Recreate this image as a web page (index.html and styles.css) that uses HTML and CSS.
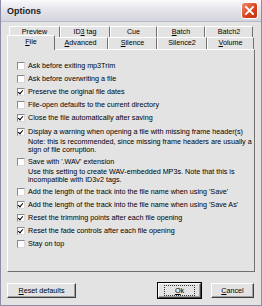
FILE: index.html
```html
<!DOCTYPE html>
<html>
<head>
    <title>Options</title>
    <link rel="stylesheet" href="styles.css">
</head>
<body>
    <div class="window">
        <div class="titlebar">
            <span class="title">Options</span>
            <span class="close">
                <svg width="15" height="15" viewBox="0 0 15 15">
                    <path d="M4 4 L11 11 M11 4 L4 11" stroke="#fff" stroke-width="1.8" stroke-linecap="square"/>
                </svg>
            </span>
        </div>

        <div class="tabs">
            <div class="tabrow back">
                <div class="tab"><u>P</u>review</div>
                <div class="tab">ID<u>3</u> tag</div>
                <div class="tab">Cue</div>
                <div class="tab"><u>B</u>atch</div>
                <div class="tab">Batch2</div>
            </div>
            <div class="tabrow front">
                <div class="tab active"><u>F</u>ile</div>
                <div class="tab"><u>A</u>dvanced</div>
                <div class="tab"><u>S</u>ilence</div>
                <div class="tab">Silence2</div>
                <div class="tab"><u>V</u>olume</div>
            </div>
        </div>

        <div class="panel">
            <div class="opt"><span class="box"></span>Ask before exiting mp3Trim</div>
            <div class="opt"><span class="box"></span>Ask before overwriting a file</div>
            <div class="opt"><span class="box checked"></span>Preserve the original file dates</div>
            <div class="opt"><span class="box"></span>File-open defaults to the current directory</div>
            <div class="opt"><span class="box checked"></span>Close the file automatically after saving</div>
            <div class="opt multi">
                <div class="line"><span class="box checked"></span>Display a warning when opening a file with missing frame header(s)</div>
                <div class="note">Note: this is recommended, since missing frame headers are usually a<br>sign of file corruption.</div>
            </div>
            <div class="opt multi">
                <div class="line"><span class="box"></span>Save with '.WAV' extension</div>
                <div class="note">Use this setting to create WAV-embedded MP3s. Note that this is<br>incompatible with ID3v2 tags.</div>
            </div>
            <div class="opt"><span class="box"></span>Add the length of the track into the file name when using 'Save'</div>
            <div class="opt"><span class="box checked"></span>Add the length of the track into the file name when using 'Save As'</div>
            <div class="opt"><span class="box checked"></span>Reset the trimming points after each file opening</div>
            <div class="opt"><span class="box checked"></span>Reset the fade controls after each file opening</div>
            <div class="opt"><span class="box"></span>Stay on top</div>
        </div>

        <div class="buttons">
            <button class="btn wide"><u>R</u>eset defaults</button>
            <span class="spacer"></span>
            <button class="btn default"><span class="focus"><u>O</u>k</span></button>
            <button class="btn"><u>C</u>ancel</button>
        </div>
    </div>
</body>
</html>
```
FILE: styles.css
```css
body {
    margin: 0;
    background-color: #e3e3e3;
    font-family: "Liberation Sans", Arial, sans-serif;
    font-size: 7.2px;
    color: #000;
}

.window {
    width: 262px;
    height: 306px;
    box-sizing: border-box;
    border: 1px solid #8c8ca8;
    border-top: none;
    background-color: #e3e3e3;
    display: flex;
    flex-direction: column;
}

.titlebar {
    height: 21px;
    display: flex;
    align-items: center;
    padding: 0 3px 0 6px;
    background: linear-gradient(#fbfbfc, #e6e6ec 40%, #d4d4dc);
    border-bottom: 1px solid #b8b8c8;
}

.title {
    flex: 1;
    font-weight: bold;
    font-size: 9px;
    color: #1c1c1c;
}

.close {
    width: 15px;
    height: 15px;
    border: 1px solid #fff;
    border-radius: 3px;
    background: linear-gradient(135deg, #f09070, #d8401c 60%, #c03010);
    display: flex;
}

.tabs {
    margin-top: 4px;
}

.tabrow {
    display: flex;
    height: 11px;
}

.tabrow.back {
    padding-left: 8px;
}

.tabrow.front {
    padding-left: 7px;
    height: 12px;
}

.tab {
    box-sizing: border-box;
    text-align: center;
    line-height: 10px;
    border-top: 1px solid #fff;
    border-left: 1px solid #fff;
    border-right: 1px solid #707070;
    border-top-left-radius: 1px;
    border-top-right-radius: 1px;
}

.back .tab:nth-child(1) { width: 51px; }
.back .tab:nth-child(2) { width: 50px; }
.back .tab:nth-child(3) { width: 47px; }
.back .tab:nth-child(4) { width: 48px; }
.back .tab:nth-child(5) { width: 48px; }

.front .tab:nth-child(1) { width: 45px; }
.front .tab:nth-child(2) { width: 55px; }
.front .tab:nth-child(3) { width: 49px; }
.front .tab:nth-child(4) { width: 50px; }
.front .tab:nth-child(5) { width: 47px; }

.tab.active {
    margin: -2px -2px 0 -1px;
    height: 15px;
    width: 48px !important;
    position: relative;
    z-index: 1;
    background-color: #e3e3e3;
    line-height: 11px;
}

.panel {
    margin: 0 6px 0 6px;
    height: 223px;
    box-sizing: border-box;
    border-top: 1px solid #fff;
    border-left: 1px solid #fff;
    border-right: 1px solid #707070;
    border-bottom: 1px solid #707070;
    padding: 9px 0 0 9px;
}

.opt {
    display: flex;
    align-items: center;
    height: 13px;
    white-space: nowrap;
}

.opt.multi {
    display: block;
    height: auto;
    margin-top: 1px;
    margin-bottom: 1px;
}

.line {
    display: flex;
    align-items: center;
    height: 13px;
}

.note {
    padding-left: 11px;
    line-height: 8px;
}

.box {
    width: 8px;
    height: 8px;
    box-sizing: border-box;
    margin-right: 3px;
    background-color: #fff;
    border: 1px solid #8a8a8a;
    border-right-color: #d8d8d8;
    border-bottom-color: #d8d8d8;
    position: relative;
}

.box.checked::after {
    content: "";
    position: absolute;
    left: 1px;
    top: 0;
    width: 2px;
    height: 4px;
    border-right: 1.5px solid #000;
    border-bottom: 1.5px solid #000;
    transform: rotate(40deg);
}

.buttons {
    display: flex;
    margin: 11px 7px 0 6px;
    gap: 10px;
}

.spacer {
    flex: 1;
}

.btn {
    height: 15px;
    width: 43px;
    padding: 0;
    font-family: inherit;
    font-size: 7.2px;
    background-color: #e3e3e3;
    border: 1px solid;
    border-color: #fff #404040 #404040 #fff;
    box-shadow: inset -1px -1px 0 #a0a0a0;
}

.btn.wide {
    width: 69px;
}

.btn.default {
    outline: 1px solid #000;
}

.focus {
    display: inline-block;
    border: 1px dotted #333;
    padding: 0 10px;
    line-height: 9px;
}
```
